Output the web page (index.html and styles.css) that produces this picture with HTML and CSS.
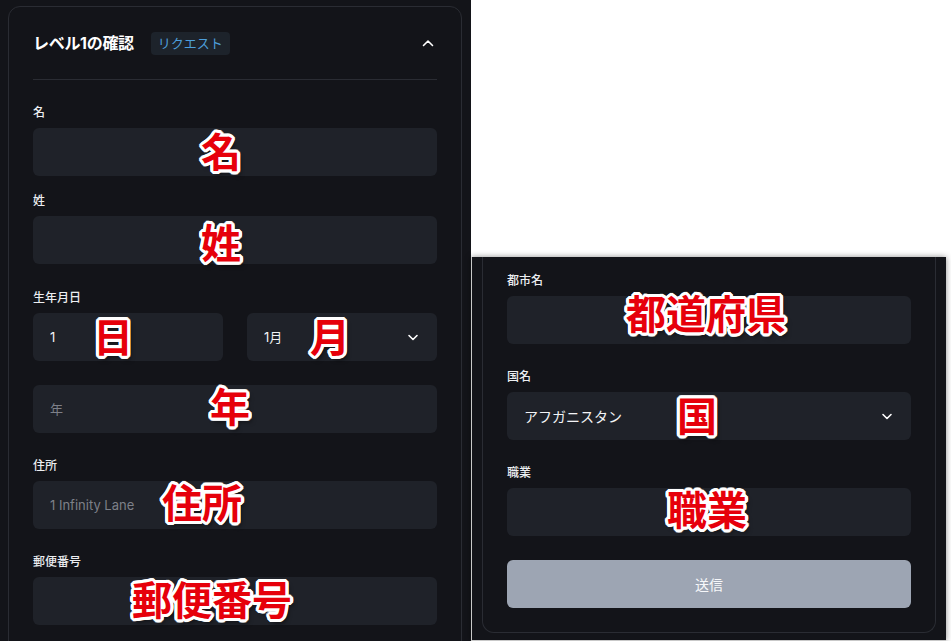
FILE: index.html
```html
<!DOCTYPE html>
<html lang="ja">
<head>
    <meta charset="UTF-8">
    <meta name="viewport" content="width=device-width, initial-scale=1.0">
    <title>レベル1の確認</title>
    <link rel="stylesheet" href="styles.css">
</head>
<body>
    <div class="shot shot-left">
        <section class="card">
            <header class="card-head">
                <h2 class="card-title">レベル1の確認</h2>
                <span class="badge">リクエスト</span>
                <svg class="chev-up" width="16" height="16" viewBox="0 0 16 16"><path d="M3.5 10.5L8 6l4.5 4.5" fill="none" stroke="#fff" stroke-width="1.6" stroke-linecap="round" stroke-linejoin="round"/></svg>
            </header>
            <div class="card-body">
                <div class="field">
                    <label class="label">名</label>
                    <div class="box">
                        <input class="input" type="text">
                        <span class="note note-mei">名</span>
                    </div>
                </div>
                <div class="field field-tight">
                    <label class="label">姓</label>
                    <div class="box">
                        <input class="input" type="text">
                        <span class="note note-sei">姓</span>
                    </div>
                </div>
                <div class="field field-wide">
                    <label class="label">生年月日</label>
                    <div class="row">
                        <div class="box">
                            <input class="input" type="text" value="1">
                            <span class="note note-day">日</span>
                        </div>
                        <div class="box">
                            <select class="input select">
                                <option>1月</option>
                            </select>
                            <svg class="chev-down" width="16" height="16" viewBox="0 0 16 16"><path d="M4 6.5L8 10.5l4-4" fill="none" stroke="#fff" stroke-width="1.6" stroke-linecap="round" stroke-linejoin="round"/></svg>
                            <span class="note note-month">月</span>
                        </div>
                    </div>
                    <div class="box year">
                        <input class="input" type="text" placeholder="年">
                        <span class="note note-year">年</span>
                    </div>
                </div>
                <div class="field">
                    <label class="label">住所</label>
                    <div class="box">
                        <input class="input" type="text" placeholder="1 Infinity Lane">
                        <span class="note note-addr">住所</span>
                    </div>
                </div>
                <div class="field">
                    <label class="label">郵便番号</label>
                    <div class="box">
                        <input class="input" type="text">
                        <span class="note note-zip">郵便番号</span>
                    </div>
                </div>
            </div>
        </section>
    </div>

    <div class="shot shot-right">
        <section class="card card-cont">
            <div class="field field-first">
                <label class="label">都市名</label>
                <div class="box">
                    <input class="input" type="text">
                    <span class="note note-pref">都道府県</span>
                </div>
            </div>
            <div class="field">
                <label class="label">国名</label>
                <div class="box">
                    <select class="input select">
                        <option>アフガニスタン</option>
                    </select>
                    <svg class="chev-down" width="16" height="16" viewBox="0 0 16 16"><path d="M4 6.5L8 10.5l4-4" fill="none" stroke="#fff" stroke-width="1.6" stroke-linecap="round" stroke-linejoin="round"/></svg>
                    <span class="note note-country">国</span>
                </div>
            </div>
            <div class="field">
                <label class="label">職業</label>
                <div class="box">
                    <input class="input" type="text">
                    <span class="note note-job">職業</span>
                </div>
            </div>
            <button class="submit" type="button">送信</button>
        </section>
    </div>
</body>
</html>
```

FILE: styles.css
```css
* {
    margin: 0;
    padding: 0;
    box-sizing: border-box;
}
body {
    width: 951px;
    height: 641px;
    overflow: hidden;
    background-color: #fff;
    display: flex;
    align-items: flex-end;
    font-family: Inter, "Noto Sans CJK JP", sans-serif;
    color: #e4e6ea;
}
.shot {
    background-color: #131419;
    overflow: hidden;
}
.shot-left {
    width: 471px;
    height: 641px;
    padding: 6px 0 0 8px;
}
.shot-right {
    width: 475px;
    height: 384px;
    border-left: 1px solid #c9c9c9;
    border-bottom: 1px solid #c9c9c9;
    box-shadow: 0 0 6px rgba(0, 0, 0, 0.45);
    padding: 0 10px 7px 10px;
}
.card {
    width: 454px;
    border: 1px solid #2a2c33;
    border-radius: 12px;
}
.shot-left .card {
    height: 700px;
}
.card-cont {
    border-top: none;
    border-radius: 0 0 12px 12px;
    padding: 16px 24px 24px;
}
.card-head {
    margin: 0 24px;
    padding: 24px 0;
    border-bottom: 1px solid #2a2c33;
    display: flex;
    align-items: center;
    height: 73px;
}
.card-title {
    font-size: 16px;
    font-weight: 700;
    color: #fff;
    line-height: 24px;
    letter-spacing: -0.3px;
}
.badge {
    margin-left: 17px;
    height: 23px;
    line-height: 23px;
    padding: 0 7px;
    border-radius: 4px;
    background-color: #1d232b;
    color: #4d9fdc;
    font-size: 13px;
}
.chev-up {
    margin-left: auto;
    margin-right: 1px;
}
.card-body {
    padding: 25px 24px 0;
}
.field {
    margin-top: 25px;
}
.card-body .field:first-child,
.field-first {
    margin-top: 0;
}
.field-tight {
    margin-top: 17px;
}
.field-wide {
    margin-top: 26px;
}
.label {
    display: block;
    font-size: 12px;
    font-weight: 500;
    line-height: 16px;
    margin-bottom: 7px;
    color: #eceef1;
}
.box {
    position: relative;
}
.year {
    margin-top: 24px;
}
.row {
    display: flex;
    gap: 24px;
}
.row .box {
    flex: 1;
}
.input {
    display: block;
    width: 100%;
    height: 48px;
    border: none;
    border-radius: 6px;
    background-color: #1f2229;
    padding: 0 17px;
    font-family: Inter, "Noto Sans CJK JP", sans-serif;
    font-size: 13px;
    color: #f3f4f6;
    outline: none;
}
.input::placeholder {
    color: #7d8088;
}
.select {
    appearance: none;
    -webkit-appearance: none;
}
.shot-right .select {
    font-size: 14px;
}
.chev-down {
    position: absolute;
    right: 16px;
    top: 16px;
    pointer-events: none;
}
.submit {
    display: block;
    width: 100%;
    height: 48px;
    margin-top: 24px;
    border: none;
    border-radius: 6px;
    background-color: #9da5b3;
    color: #f7f8fa;
    font-family: Inter, "Noto Sans CJK JP", sans-serif;
    font-size: 14px;
}

/* red annotations over the fields */
.note {
    position: absolute;
    transform: translate(-50%, -50%);
    font-family: "Noto Sans CJK JP", sans-serif;
    font-weight: 700;
    font-size: 40px;
    line-height: 1;
    white-space: nowrap;
    color: #e6000b;
    pointer-events: none;
    text-shadow:
        3px 0 #fff, -3px 0 #fff, 0 3px #fff, 0 -3px #fff,
        2px 2px #fff, -2px -2px #fff, 2px -2px #fff, -2px 2px #fff,
        3px 1px #fff, 3px -1px #fff, -3px 1px #fff, -3px -1px #fff,
        1px 3px #fff, -1px 3px #fff, 1px -3px #fff, -1px -3px #fff,
        3px 4px 4px rgba(0, 0, 0, 0.55);
}
.note-mei { left: 188px; top: 22px; }
.note-sei { left: 188px; top: 25px; }
.note-day { left: 80px; top: 22px; }
.note-month { left: 83px; top: 22px; }
.note-year { left: 197px; top: 20px; }
.note-addr { left: 169px; top: 20px; }
.note-zip { left: 179px; top: 21px; }
.note-pref { left: 199px; top: 16px; }
.note-country { left: 190px; top: 22px; }
.note-job { left: 200px; top: 20px; }
```
